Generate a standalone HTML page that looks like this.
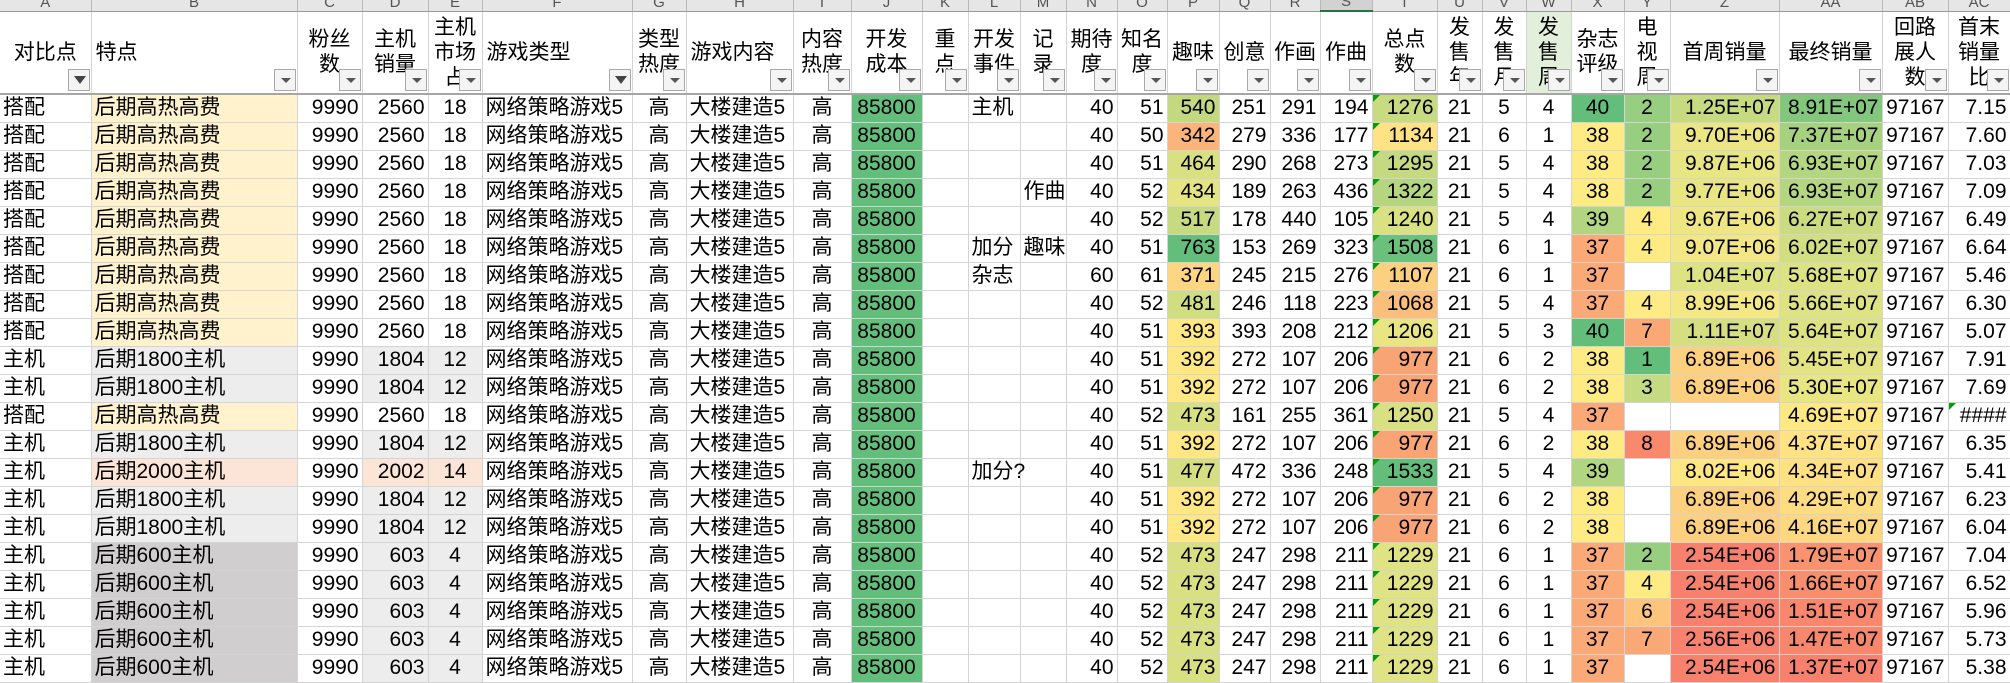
<!DOCTYPE html>
<html><head><meta charset="utf-8"><style>
html,body{margin:0;padding:0;background:#fff;overflow:hidden}
body{width:2010px;height:681px;font-family:"Liberation Sans","Noto Sans CJK SC",sans-serif;font-size:21px;color:#000}
table{border-collapse:collapse;table-layout:fixed;width:2010px;position:absolute;left:0;top:0}
td{padding:0 3px;white-space:nowrap;overflow:hidden;border-right:1px solid #d4d4d4;border-bottom:1px solid #d4d4d4;height:28px;line-height:24px;box-sizing:border-box;vertical-align:middle}
tr.lt td{height:10px;line-height:10px;background:#e6e6e6;border-right:1px solid #b8b8b8;border-bottom:1px solid #9b9b9b;color:#555;font-size:15px;text-align:center;overflow:hidden;padding:0;vertical-align:bottom}
tr.lt td span{position:relative;top:-3px}
tr.lt td.sel{background:#d2d2d2;border-bottom:2px solid #217346}
tr.hd td{height:83px;line-height:25px;vertical-align:middle;text-align:center;position:relative;border-bottom:2px solid #a6a6a6;padding:0 2px;overflow:visible}
tr.hd td.l{text-align:left;padding-left:4px}
.f{position:absolute;right:1px;bottom:2px;width:22px;height:22px;border:1px solid #a9a9a9;background:#f4f4f4;box-sizing:border-box}
.f:after{content:"";position:absolute;left:6px;top:8px;border-left:5px solid transparent;border-right:5px solid transparent;border-top:5px solid #555}
.f.fn:after{left:5px;top:6px;border-left:6px solid transparent;border-right:6px solid transparent;border-top:8px solid #444}
.r{text-align:right}.c{text-align:center}
.ov{overflow:visible}
.b1{background:#fff2cc}.b2{background:#ededed}.b3{background:#fce4d6}.b4{background:#d0cece}
.j{background:#63be7b}
.t{position:relative}
.t i{position:absolute;left:0;top:0;width:0;height:0;border-top:7px solid #00a000;border-right:7px solid transparent}
</style></head><body>
<table>
<colgroup><col style="width:91px"><col style="width:206px"><col style="width:65px"><col style="width:66px"><col style="width:54px"><col style="width:150px"><col style="width:54px"><col style="width:107px"><col style="width:58px"><col style="width:71px"><col style="width:46px"><col style="width:52px"><col style="width:46px"><col style="width:51px"><col style="width:50px"><col style="width:52px"><col style="width:51px"><col style="width:50px"><col style="width:52px"><col style="width:65px"><col style="width:45px"><col style="width:44px"><col style="width:45px"><col style="width:53px"><col style="width:46px"><col style="width:109px"><col style="width:103px"><col style="width:66px"><col style="width:62px"></colgroup>
<tr class="lt"><td><span>A</span></td><td><span>B</span></td><td><span>C</span></td><td><span>D</span></td><td><span>E</span></td><td><span>F</span></td><td><span>G</span></td><td><span>H</span></td><td><span>I</span></td><td><span>J</span></td><td><span>K</span></td><td><span>L</span></td><td><span>M</span></td><td><span>N</span></td><td><span>O</span></td><td><span>P</span></td><td><span>Q</span></td><td><span>R</span></td><td class="sel"><span>S</span></td><td><span>T</span></td><td><span>U</span></td><td><span>V</span></td><td><span>W</span></td><td><span>X</span></td><td><span>Y</span></td><td><span>Z</span></td><td><span>AA</span></td><td><span>AB</span></td><td><span>AC</span></td></tr>
<tr class="hd">
<td>对比点<b class="f fn"></b></td>
<td class="l">特点<b class="f"></b></td>
<td>粉丝<br>数<b class="f"></b></td>
<td>主机<br>销量<b class="f"></b></td>
<td>主机<br>市场<br>占<b class="f"></b></td>
<td class="l">游戏类型<b class="f fn"></b></td>
<td>类型<br>热度<b class="f"></b></td>
<td class="l">游戏内容<b class="f"></b></td>
<td>内容<br>热度<b class="f"></b></td>
<td>开发<br>成本<b class="f"></b></td>
<td>重<br>点<b class="f"></b></td>
<td>开发<br>事件<b class="f"></b></td>
<td>记<br>录<b class="f"></b></td>
<td>期待<br>度<b class="f"></b></td>
<td>知名<br>度<b class="f"></b></td>
<td>趣味<b class="f"></b></td>
<td>创意<b class="f"></b></td>
<td>作画<b class="f"></b></td>
<td>作曲<b class="f"></b></td>
<td>总点<br>数<b class="f"></b></td>
<td>发<br>售<br>年<b class="f"></b></td>
<td>发<br>售<br>月<b class="f"></b></td>
<td style="background:#e2efda">发<br>售<br>周<b class="f"></b></td>
<td>杂志<br>评级<b class="f"></b></td>
<td>电<br>视<br>周<b class="f"></b></td>
<td>首周销量<b class="f"></b></td>
<td>最终销量<b class="f"></b></td>
<td>回路<br>展人<br>数<b class="f"></b></td>
<td>首末<br>销量<br>比<b class="f"></b></td>
</tr>
<tr><td>搭配</td><td class="b1">后期高热高费</td><td class="r">9990</td><td class="r">2560</td><td class="c">18</td><td>网络策略游戏5</td><td class="c">高</td><td>大楼建造5</td><td class="c">高</td><td class="c j">85800</td><td></td><td class="ov">主机</td><td></td><td class="r">40</td><td class="r">51</td><td class="r" style="background:#c2d980">540</td><td class="r">251</td><td class="r">291</td><td class="r">194</td><td class="r t" style="background:#c9db81"><i></i>1276</td><td class="c">21</td><td class="c">5</td><td class="c">4</td><td class="c" style="background:#63be7b">40</td><td class="c" style="background:#98ce7f">2</td><td class="r" style="background:#c6da80">1.25E+07</td><td class="r" style="background:#83c77d">8.91E+07</td><td class="r">97167</td><td class="r">7.15</td></tr>
<tr><td>搭配</td><td class="b1">后期高热高费</td><td class="r">9990</td><td class="r">2560</td><td class="c">18</td><td>网络策略游戏5</td><td class="c">高</td><td>大楼建造5</td><td class="c">高</td><td class="c j">85800</td><td></td><td></td><td></td><td class="r">40</td><td class="r">50</td><td class="r" style="background:#fbb479">342</td><td class="r">279</td><td class="r">336</td><td class="r">177</td><td class="r t" style="background:#ffe283"><i></i>1134</td><td class="c">21</td><td class="c">6</td><td class="c">1</td><td class="c" style="background:#ffeb84">38</td><td class="c" style="background:#98ce7f">2</td><td class="r" style="background:#ebe683">9.70E+06</td><td class="r" style="background:#a6d27f">7.37E+07</td><td class="r">97167</td><td class="r">7.60</td></tr>
<tr><td>搭配</td><td class="b1">后期高热高费</td><td class="r">9990</td><td class="r">2560</td><td class="c">18</td><td>网络策略游戏5</td><td class="c">高</td><td>大楼建造5</td><td class="c">高</td><td class="c j">85800</td><td></td><td></td><td></td><td class="r">40</td><td class="r">51</td><td class="r" style="background:#d8e082">464</td><td class="r">290</td><td class="r">268</td><td class="r">273</td><td class="r t" style="background:#c4d980"><i></i>1295</td><td class="c">21</td><td class="c">5</td><td class="c">4</td><td class="c" style="background:#ffeb84">38</td><td class="c" style="background:#98ce7f">2</td><td class="r" style="background:#e8e583">9.87E+06</td><td class="r" style="background:#b5d680">6.93E+07</td><td class="r">97167</td><td class="r">7.03</td></tr>
<tr><td>搭配</td><td class="b1">后期高热高费</td><td class="r">9990</td><td class="r">2560</td><td class="c">18</td><td>网络策略游戏5</td><td class="c">高</td><td>大楼建造5</td><td class="c">高</td><td class="c j">85800</td><td></td><td></td><td class="ov">作曲</td><td class="r">40</td><td class="r">52</td><td class="r" style="background:#e4e483">434</td><td class="r">189</td><td class="r">263</td><td class="r">436</td><td class="r t" style="background:#b5d57f"><i></i>1322</td><td class="c">21</td><td class="c">5</td><td class="c">4</td><td class="c" style="background:#ffeb84">38</td><td class="c" style="background:#98ce7f">2</td><td class="r" style="background:#eae583">9.77E+06</td><td class="r" style="background:#b5d680">6.93E+07</td><td class="r">97167</td><td class="r">7.09</td></tr>
<tr><td>搭配</td><td class="b1">后期高热高费</td><td class="r">9990</td><td class="r">2560</td><td class="c">18</td><td>网络策略游戏5</td><td class="c">高</td><td>大楼建造5</td><td class="c">高</td><td class="c j">85800</td><td></td><td></td><td></td><td class="r">40</td><td class="r">52</td><td class="r" style="background:#c8da80">517</td><td class="r">178</td><td class="r">440</td><td class="r">105</td><td class="r t" style="background:#dae182"><i></i>1240</td><td class="c">21</td><td class="c">5</td><td class="c">4</td><td class="c" style="background:#b1d580">39</td><td class="c" style="background:#ffeb84">4</td><td class="r" style="background:#ede683">9.67E+06</td><td class="r" style="background:#cadb81">6.27E+07</td><td class="r">97167</td><td class="r">6.49</td></tr>
<tr><td>搭配</td><td class="b1">后期高热高费</td><td class="r">9990</td><td class="r">2560</td><td class="c">18</td><td>网络策略游戏5</td><td class="c">高</td><td>大楼建造5</td><td class="c">高</td><td class="c j">85800</td><td></td><td class="ov">加分</td><td class="ov">趣味</td><td class="r">40</td><td class="r">51</td><td class="r" style="background:#63be7b">763</td><td class="r">153</td><td class="r">269</td><td class="r">323</td><td class="r t" style="background:#6bc17c"><i></i>1508</td><td class="c">21</td><td class="c">6</td><td class="c">1</td><td class="c" style="background:#fbaa77">37</td><td class="c" style="background:#ffeb84">4</td><td class="r" style="background:#f2e784">9.07E+06</td><td class="r" style="background:#d2de82">6.02E+07</td><td class="r">97167</td><td class="r">6.64</td></tr>
<tr><td>搭配</td><td class="b1">后期高热高费</td><td class="r">9990</td><td class="r">2560</td><td class="c">18</td><td>网络策略游戏5</td><td class="c">高</td><td>大楼建造5</td><td class="c">高</td><td class="c j">85800</td><td></td><td class="ov">杂志</td><td></td><td class="r">60</td><td class="r">61</td><td class="r" style="background:#fed580">371</td><td class="r">245</td><td class="r">215</td><td class="r">276</td><td class="r t" style="background:#fdd07f"><i></i>1107</td><td class="c">21</td><td class="c">6</td><td class="c">1</td><td class="c" style="background:#fbaa77">37</td><td class="c"></td><td class="r" style="background:#dde282">1.04E+07</td><td class="r" style="background:#dde283">5.68E+07</td><td class="r">97167</td><td class="r">5.46</td></tr>
<tr><td>搭配</td><td class="b1">后期高热高费</td><td class="r">9990</td><td class="r">2560</td><td class="c">18</td><td>网络策略游戏5</td><td class="c">高</td><td>大楼建造5</td><td class="c">高</td><td class="c j">85800</td><td></td><td></td><td></td><td class="r">40</td><td class="r">52</td><td class="r" style="background:#d0de82">481</td><td class="r">246</td><td class="r">118</td><td class="r">223</td><td class="r t" style="background:#fbbe7b"><i></i>1068</td><td class="c">21</td><td class="c">5</td><td class="c">4</td><td class="c" style="background:#fbaa77">37</td><td class="c" style="background:#ffeb84">4</td><td class="r" style="background:#f3e884">8.99E+06</td><td class="r" style="background:#dde283">5.66E+07</td><td class="r">97167</td><td class="r">6.30</td></tr>
<tr><td>搭配</td><td class="b1">后期高热高费</td><td class="r">9990</td><td class="r">2560</td><td class="c">18</td><td>网络策略游戏5</td><td class="c">高</td><td>大楼建造5</td><td class="c">高</td><td class="c j">85800</td><td></td><td></td><td></td><td class="r">40</td><td class="r">51</td><td class="r" style="background:#ffe784">393</td><td class="r">393</td><td class="r">208</td><td class="r">212</td><td class="r t" style="background:#e9e583"><i></i>1206</td><td class="c">21</td><td class="c">5</td><td class="c">3</td><td class="c" style="background:#63be7b">40</td><td class="c" style="background:#fba877">7</td><td class="r" style="background:#d5df82">1.11E+07</td><td class="r" style="background:#dde283">5.64E+07</td><td class="r">97167</td><td class="r">5.07</td></tr>
<tr><td>主机</td><td class="b2">后期1800主机</td><td class="r">9990</td><td class="r b2">1804</td><td class="c b2">12</td><td>网络策略游戏5</td><td class="c">高</td><td>大楼建造5</td><td class="c">高</td><td class="c j">85800</td><td></td><td></td><td></td><td class="r">40</td><td class="r">51</td><td class="r" style="background:#ffe884">392</td><td class="r">272</td><td class="r">107</td><td class="r">206</td><td class="r t" style="background:#f9a474"><i></i>977</td><td class="c">21</td><td class="c">6</td><td class="c">2</td><td class="c" style="background:#ffeb84">38</td><td class="c" style="background:#63be7b">1</td><td class="r" style="background:#fdd07f">6.89E+06</td><td class="r" style="background:#e3e383">5.45E+07</td><td class="r">97167</td><td class="r">7.91</td></tr>
<tr><td>主机</td><td class="b2">后期1800主机</td><td class="r">9990</td><td class="r b2">1804</td><td class="c b2">12</td><td>网络策略游戏5</td><td class="c">高</td><td>大楼建造5</td><td class="c">高</td><td class="c j">85800</td><td></td><td></td><td></td><td class="r">40</td><td class="r">51</td><td class="r" style="background:#ffe884">392</td><td class="r">272</td><td class="r">107</td><td class="r">206</td><td class="r t" style="background:#f9a474"><i></i>977</td><td class="c">21</td><td class="c">6</td><td class="c">2</td><td class="c" style="background:#ffeb84">38</td><td class="c" style="background:#c5db81">3</td><td class="r" style="background:#fdd07f">6.89E+06</td><td class="r" style="background:#e8e583">5.30E+07</td><td class="r">97167</td><td class="r">7.69</td></tr>
<tr><td>搭配</td><td class="b1">后期高热高费</td><td class="r">9990</td><td class="r">2560</td><td class="c">18</td><td>网络策略游戏5</td><td class="c">高</td><td>大楼建造5</td><td class="c">高</td><td class="c j">85800</td><td></td><td></td><td></td><td class="r">40</td><td class="r">52</td><td class="r" style="background:#d8e082">473</td><td class="r">161</td><td class="r">255</td><td class="r">361</td><td class="r t" style="background:#d8e082"><i></i>1250</td><td class="c">21</td><td class="c">5</td><td class="c">4</td><td class="c" style="background:#fbaa77">37</td><td class="c"></td><td class="r"></td><td class="r" style="background:#fde884">4.69E+07</td><td class="r">97167</td><td class="r t"><i></i>####</td></tr>
<tr><td>主机</td><td class="b2">后期1800主机</td><td class="r">9990</td><td class="r b2">1804</td><td class="c b2">12</td><td>网络策略游戏5</td><td class="c">高</td><td>大楼建造5</td><td class="c">高</td><td class="c j">85800</td><td></td><td></td><td></td><td class="r">40</td><td class="r">51</td><td class="r" style="background:#ffe884">392</td><td class="r">272</td><td class="r">107</td><td class="r">206</td><td class="r t" style="background:#f9a474"><i></i>977</td><td class="c">21</td><td class="c">6</td><td class="c">2</td><td class="c" style="background:#ffeb84">38</td><td class="c" style="background:#f8896d">8</td><td class="r" style="background:#fdd07f">6.89E+06</td><td class="r" style="background:#ffe283">4.37E+07</td><td class="r">97167</td><td class="r">6.35</td></tr>
<tr><td>主机</td><td class="b3">后期2000主机</td><td class="r">9990</td><td class="r b3">2002</td><td class="c b3">14</td><td>网络策略游戏5</td><td class="c">高</td><td>大楼建造5</td><td class="c">高</td><td class="c j">85800</td><td></td><td class="ov">加分?</td><td></td><td class="r">40</td><td class="r">51</td><td class="r" style="background:#d5df82">477</td><td class="r">472</td><td class="r">336</td><td class="r">248</td><td class="r t" style="background:#63be7b"><i></i>1533</td><td class="c">21</td><td class="c">5</td><td class="c">4</td><td class="c" style="background:#b1d580">39</td><td class="c"></td><td class="r" style="background:#fee683">8.02E+06</td><td class="r" style="background:#ffe183">4.34E+07</td><td class="r">97167</td><td class="r">5.41</td></tr>
<tr><td>主机</td><td class="b2">后期1800主机</td><td class="r">9990</td><td class="r b2">1804</td><td class="c b2">12</td><td>网络策略游戏5</td><td class="c">高</td><td>大楼建造5</td><td class="c">高</td><td class="c j">85800</td><td></td><td></td><td></td><td class="r">40</td><td class="r">51</td><td class="r" style="background:#ffe884">392</td><td class="r">272</td><td class="r">107</td><td class="r">206</td><td class="r t" style="background:#f9a474"><i></i>977</td><td class="c">21</td><td class="c">6</td><td class="c">2</td><td class="c" style="background:#ffeb84">38</td><td class="c"></td><td class="r" style="background:#fdd07f">6.89E+06</td><td class="r" style="background:#fedc81">4.29E+07</td><td class="r">97167</td><td class="r">6.23</td></tr>
<tr><td>主机</td><td class="b2">后期1800主机</td><td class="r">9990</td><td class="r b2">1804</td><td class="c b2">12</td><td>网络策略游戏5</td><td class="c">高</td><td>大楼建造5</td><td class="c">高</td><td class="c j">85800</td><td></td><td></td><td></td><td class="r">40</td><td class="r">51</td><td class="r" style="background:#ffe884">392</td><td class="r">272</td><td class="r">107</td><td class="r">206</td><td class="r t" style="background:#f9a474"><i></i>977</td><td class="c">21</td><td class="c">6</td><td class="c">2</td><td class="c" style="background:#ffeb84">38</td><td class="c"></td><td class="r" style="background:#fdd07f">6.89E+06</td><td class="r" style="background:#fed880">4.16E+07</td><td class="r">97167</td><td class="r">6.04</td></tr>
<tr><td>主机</td><td class="b4">后期600主机</td><td class="r">9990</td><td class="r b2">603</td><td class="c b2">4</td><td>网络策略游戏5</td><td class="c">高</td><td>大楼建造5</td><td class="c">高</td><td class="c j">85800</td><td></td><td></td><td></td><td class="r">40</td><td class="r">52</td><td class="r" style="background:#d8e082">473</td><td class="r">247</td><td class="r">298</td><td class="r">211</td><td class="r t" style="background:#e0e383"><i></i>1229</td><td class="c">21</td><td class="c">6</td><td class="c">1</td><td class="c" style="background:#fbaa77">37</td><td class="c" style="background:#98ce7f">2</td><td class="r" style="background:#f8816e">2.54E+06</td><td class="r" style="background:#f9926f">1.79E+07</td><td class="r">97167</td><td class="r">7.04</td></tr>
<tr><td>主机</td><td class="b4">后期600主机</td><td class="r">9990</td><td class="r b2">603</td><td class="c b2">4</td><td>网络策略游戏5</td><td class="c">高</td><td>大楼建造5</td><td class="c">高</td><td class="c j">85800</td><td></td><td></td><td></td><td class="r">40</td><td class="r">52</td><td class="r" style="background:#d8e082">473</td><td class="r">247</td><td class="r">298</td><td class="r">211</td><td class="r t" style="background:#e0e383"><i></i>1229</td><td class="c">21</td><td class="c">6</td><td class="c">1</td><td class="c" style="background:#fbaa77">37</td><td class="c" style="background:#ffeb84">4</td><td class="r" style="background:#f8816e">2.54E+06</td><td class="r" style="background:#f98e6f">1.66E+07</td><td class="r">97167</td><td class="r">6.52</td></tr>
<tr><td>主机</td><td class="b4">后期600主机</td><td class="r">9990</td><td class="r b2">603</td><td class="c b2">4</td><td>网络策略游戏5</td><td class="c">高</td><td>大楼建造5</td><td class="c">高</td><td class="c j">85800</td><td></td><td></td><td></td><td class="r">40</td><td class="r">52</td><td class="r" style="background:#d8e082">473</td><td class="r">247</td><td class="r">298</td><td class="r">211</td><td class="r t" style="background:#e0e383"><i></i>1229</td><td class="c">21</td><td class="c">6</td><td class="c">1</td><td class="c" style="background:#fbaa77">37</td><td class="c" style="background:#fcc47d">6</td><td class="r" style="background:#f8816e">2.54E+06</td><td class="r" style="background:#f8876d">1.51E+07</td><td class="r">97167</td><td class="r">5.96</td></tr>
<tr><td>主机</td><td class="b4">后期600主机</td><td class="r">9990</td><td class="r b2">603</td><td class="c b2">4</td><td>网络策略游戏5</td><td class="c">高</td><td>大楼建造5</td><td class="c">高</td><td class="c j">85800</td><td></td><td></td><td></td><td class="r">40</td><td class="r">52</td><td class="r" style="background:#d8e082">473</td><td class="r">247</td><td class="r">298</td><td class="r">211</td><td class="r t" style="background:#e0e383"><i></i>1229</td><td class="c">21</td><td class="c">6</td><td class="c">1</td><td class="c" style="background:#fbaa77">37</td><td class="c" style="background:#fba877">7</td><td class="r" style="background:#f8826e">2.56E+06</td><td class="r" style="background:#f8866d">1.47E+07</td><td class="r">97167</td><td class="r">5.73</td></tr>
<tr><td>主机</td><td class="b4">后期600主机</td><td class="r">9990</td><td class="r b2">603</td><td class="c b2">4</td><td>网络策略游戏5</td><td class="c">高</td><td>大楼建造5</td><td class="c">高</td><td class="c j">85800</td><td></td><td></td><td></td><td class="r">40</td><td class="r">52</td><td class="r" style="background:#d8e082">473</td><td class="r">247</td><td class="r">298</td><td class="r">211</td><td class="r t" style="background:#e0e383"><i></i>1229</td><td class="c">21</td><td class="c">6</td><td class="c">1</td><td class="c" style="background:#fbaa77">37</td><td class="c"></td><td class="r" style="background:#f8816e">2.54E+06</td><td class="r" style="background:#f8816e">1.37E+07</td><td class="r">97167</td><td class="r">5.38</td></tr>
</table>
</body></html>
